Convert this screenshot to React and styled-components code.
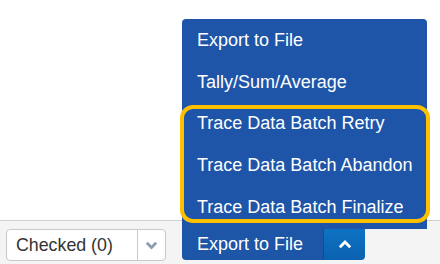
import React from "react";
import styled, { createGlobalStyle } from "styled-components";

const Global = createGlobalStyle`
  html, body { margin: 0; padding: 0; background: #ffffff; }
  body { font-family: "Liberation Sans", Arial, sans-serif; }
  * { box-sizing: border-box; }
`;

const Page = styled.div`
  width: 440px;
  height: 264px;
  display: flex;
  flex-direction: column;
  overflow: hidden;
`;

const Canvas = styled.div`
  flex: 1;
  background: #ffffff;
`;

const Footer = styled.div`
  height: 44px;
  border-top: 1px solid #cfcfcf;
  background: #f4f4f4;
  display: flex;
  align-items: flex-start;
  gap: 16px;
  padding: 8px 6px 0;
`;

const Select = styled.div`
  width: 160px;
  height: 32px;
  display: flex;
  background: #ffffff;
  border: 1px solid #c8c8c8;
  border-radius: 4px;
`;

const SelectValue = styled.div`
  flex: 1;
  display: flex;
  align-items: center;
  padding-left: 9px;
  font-size: 17.8px;
  color: #333333;
  border-right: 1px solid #c8c8c8;
`;

const SelectArrow = styled.div`
  width: 27px;
  display: flex;
  align-items: center;
  justify-content: center;
`;

const Group = styled.div`
  position: relative;
  display: flex;
  height: 31px;
`;

const MainButton = styled.button`
  width: 142px;
  height: 31px;
  border: none;
  margin: 0;
  padding: 0 0 0 15px;
  text-align: left;
  font-family: inherit;
  font-size: 18px;
  color: #ffffff;
  background: #1d55a7;
  border-radius: 0 0 0 4px;
  border-right: 1px solid #164a96;
`;

const ToggleButton = styled.button`
  width: 41px;
  height: 31px;
  border: none;
  margin: 0;
  padding: 0;
  display: flex;
  align-items: center;
  justify-content: center;
  background: linear-gradient(#0e72c3, #0a62b0);
  border-radius: 0 0 4px 0;
`;

const Menu = styled.div`
  position: absolute;
  left: 0;
  bottom: 100%;
  width: 245px;
  height: 210px;
  padding: 1px 0;
  background: #1e55a8;
  border-radius: 4px 4px 0 0;
  display: flex;
  flex-direction: column;
`;

const Item = styled.div`
  height: 41.6px;
  display: flex;
  align-items: center;
  padding-left: 15px;
  font-size: 18px;
  color: #ffffff;
  white-space: nowrap;
`;

const Highlight = styled.div`
  position: absolute;
  left: -2px;
  top: 86px;
  width: 250px;
  height: 118px;
  border: 4px solid #ffc000;
  border-radius: 13px;
  pointer-events: none;
`;

const items = [
  "Export to File",
  "Tally/Sum/Average",
  "Trace Data Batch Retry",
  "Trace Data Batch Abandon",
  "Trace Data Batch Finalize",
];

export default function App() {
  return (
    <>
      <Global />
      <Page>
        <Canvas />
        <Footer>
          <Select>
            <SelectValue>Checked (0)</SelectValue>
            <SelectArrow>
              <svg width="13" height="9" viewBox="0 0 13 9">
                <path d="M1.8 1.8 L6.5 6.5 L11.2 1.8" fill="none" stroke="#8e9cb0" strokeWidth="2.8" />
              </svg>
            </SelectArrow>
          </Select>
          <Group>
            <Menu>
              {items.map((t) => (
                <Item key={t}>{t}</Item>
              ))}
              <Highlight />
            </Menu>
            <MainButton>Export to File</MainButton>
            <ToggleButton>
              <svg width="14" height="9" viewBox="0 0 14 9">
                <path d="M1.8 7.2 L7 2 L12.2 7.2" fill="none" stroke="#ffffff" strokeWidth="2.8" />
              </svg>
            </ToggleButton>
          </Group>
        </Footer>
      </Page>
    </>
  );
}
